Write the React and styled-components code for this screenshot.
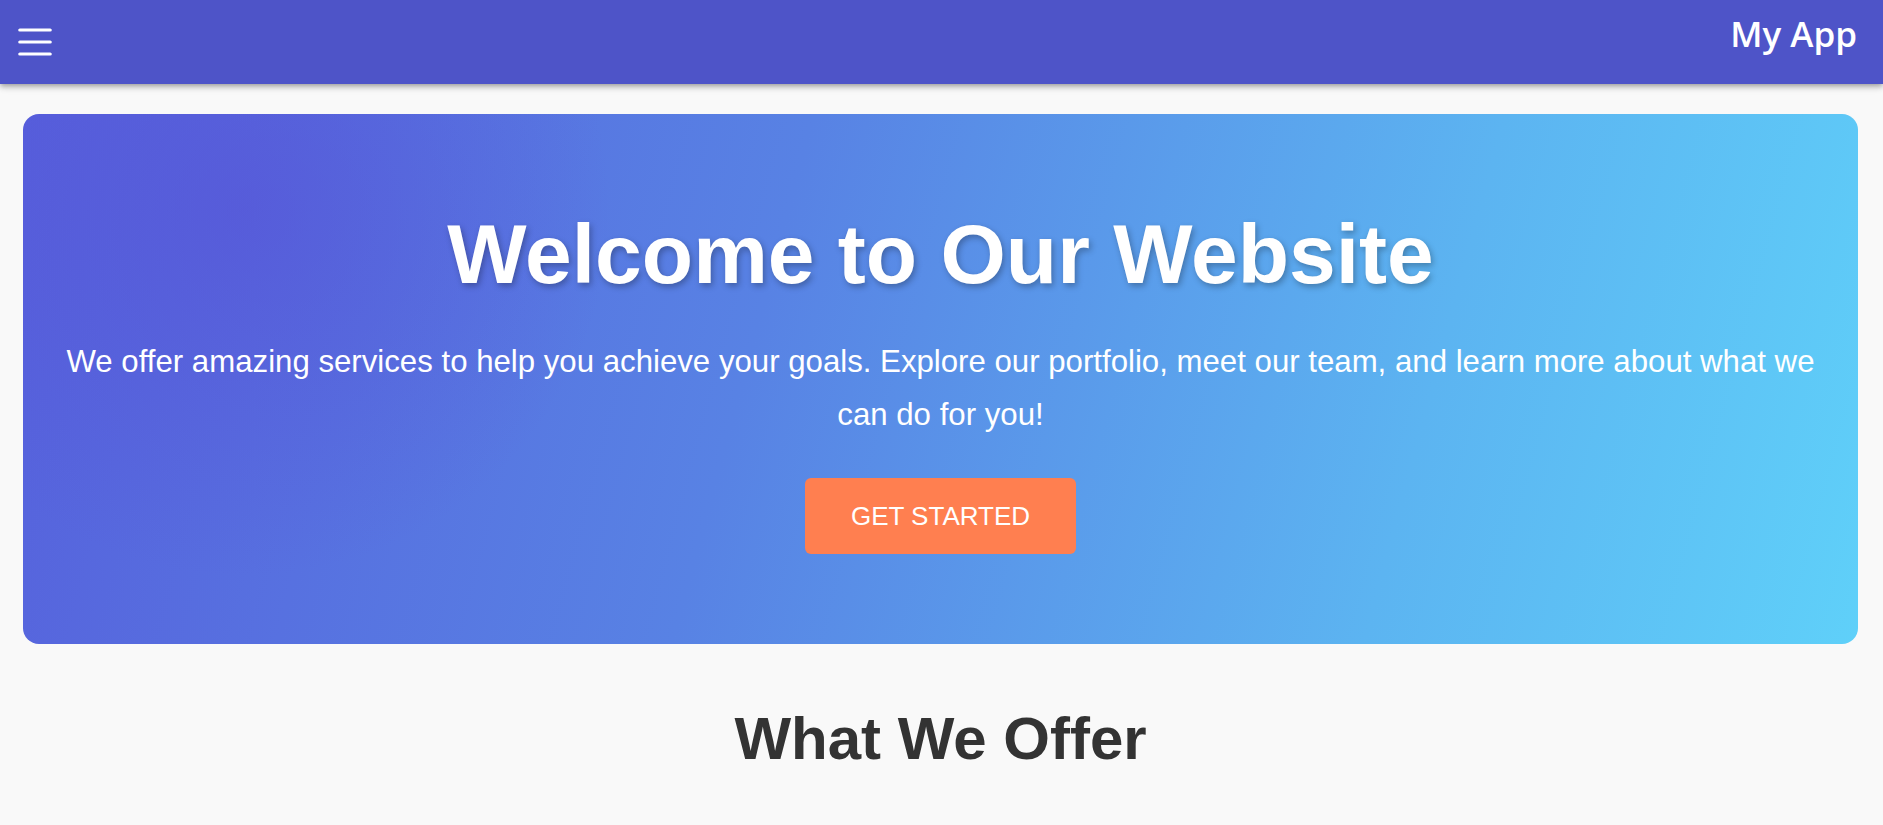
import React from "react";
import styled, { createGlobalStyle } from "styled-components";

const GlobalStyle = createGlobalStyle`
  html, body {
    margin: 0;
    padding: 0;
    background: #f9f9f9;
    font-family: "Liberation Sans", Arial, sans-serif;
    overflow: hidden;
  }
  * { box-sizing: border-box; }
`;

const TopBar = styled.header`
  height: 84px;
  background: #4e54c8;
  display: flex;
  align-items: center;
  justify-content: space-between;
  padding: 0 26px 0 11px;
  box-shadow: 0 2px 4px -1px rgba(0,0,0,0.2), 0 4px 5px 0 rgba(0,0,0,0.14), 0 1px 10px 0 rgba(0,0,0,0.12);
  position: relative;
  z-index: 2;
`;

const MenuButton = styled.button`
  width: 48px;
  height: 48px;
  padding: 0;
  border: none;
  background: transparent;
  display: flex;
  align-items: center;
  justify-content: center;
  cursor: pointer;
`;

const Brand = styled.h1`
  align-self: flex-start;
  margin: 10px 0 0;
  font-family: "Open Sans", "Noto Sans", sans-serif;
  font-weight: 600;
  font-size: 35px;
  line-height: 48px;
  color: #ffffff;
`;

const Main = styled.main`
  padding: 30px 25px 0 23px;
  display: flex;
  flex-direction: column;
`;

const Hero = styled.section`
  height: 530px;
  border-radius: 16px;
  padding: 0 36px;
  display: flex;
  flex-direction: column;
  align-items: center;
  justify-content: center;
  text-align: center;
  color: #ffffff;
  background:
    radial-gradient(circle at 12% 18%, rgba(86, 80, 214, 0.55) 0%, rgba(86, 80, 214, 0) 22%),
    linear-gradient(105deg, #5660dc 0%, #5882e4 40%, #5cb4f1 75%, #5fd0f9 100%);
`;

const Title = styled.h2`
  margin: 0;
  font-size: 84px;
  font-weight: 700;
  line-height: 1.2;
  text-shadow: 2px 3px 6px rgba(0, 0, 0, 0.28);
`;

const Lead = styled.p`
  margin: 30px 0 0;
  font-size: 31.2px;
  line-height: 53px;
`;

const CtaButton = styled.button`
  margin-top: 37px;
  height: 76px;
  padding: 0 46px;
  border: none;
  border-radius: 6px;
  background: #ff7f50;
  color: #ffffff;
  font-family: "Liberation Sans", Arial, sans-serif;
  font-size: 26px;
  line-height: 1;
  text-transform: uppercase;
  cursor: pointer;
`;

const Section = styled.section`
  padding-top: 59px;
  display: flex;
  justify-content: center;
`;

const SectionTitle = styled.h2`
  margin: 0;
  font-size: 60px;
  font-weight: 700;
  line-height: 1.2;
  color: #333333;
`;

function MenuIcon() {
  return (
    <svg width="48" height="48" viewBox="0 0 48 48" fill="none" stroke="#ffffff" strokeWidth="3.2" strokeLinecap="round">
      <line x1="8.8" y1="12" x2="39.2" y2="12" />
      <line x1="8.8" y1="24" x2="39.2" y2="24" />
      <line x1="8.8" y1="36" x2="39.2" y2="36" />
    </svg>
  );
}

export default function App() {
  return (
    <>
      <GlobalStyle />
      <TopBar>
        <MenuButton aria-label="menu">
          <MenuIcon />
        </MenuButton>
        <Brand>My App</Brand>
      </TopBar>
      <Main>
        <Hero>
          <Title>Welcome to Our Website</Title>
          <Lead>
            We offer amazing services to help you achieve your goals. Explore our portfolio, meet our team, and learn more about what we can do for you!
          </Lead>
          <CtaButton>Get Started</CtaButton>
        </Hero>
        <Section>
          <SectionTitle>What We Offer</SectionTitle>
        </Section>
      </Main>
    </>
  );
}
